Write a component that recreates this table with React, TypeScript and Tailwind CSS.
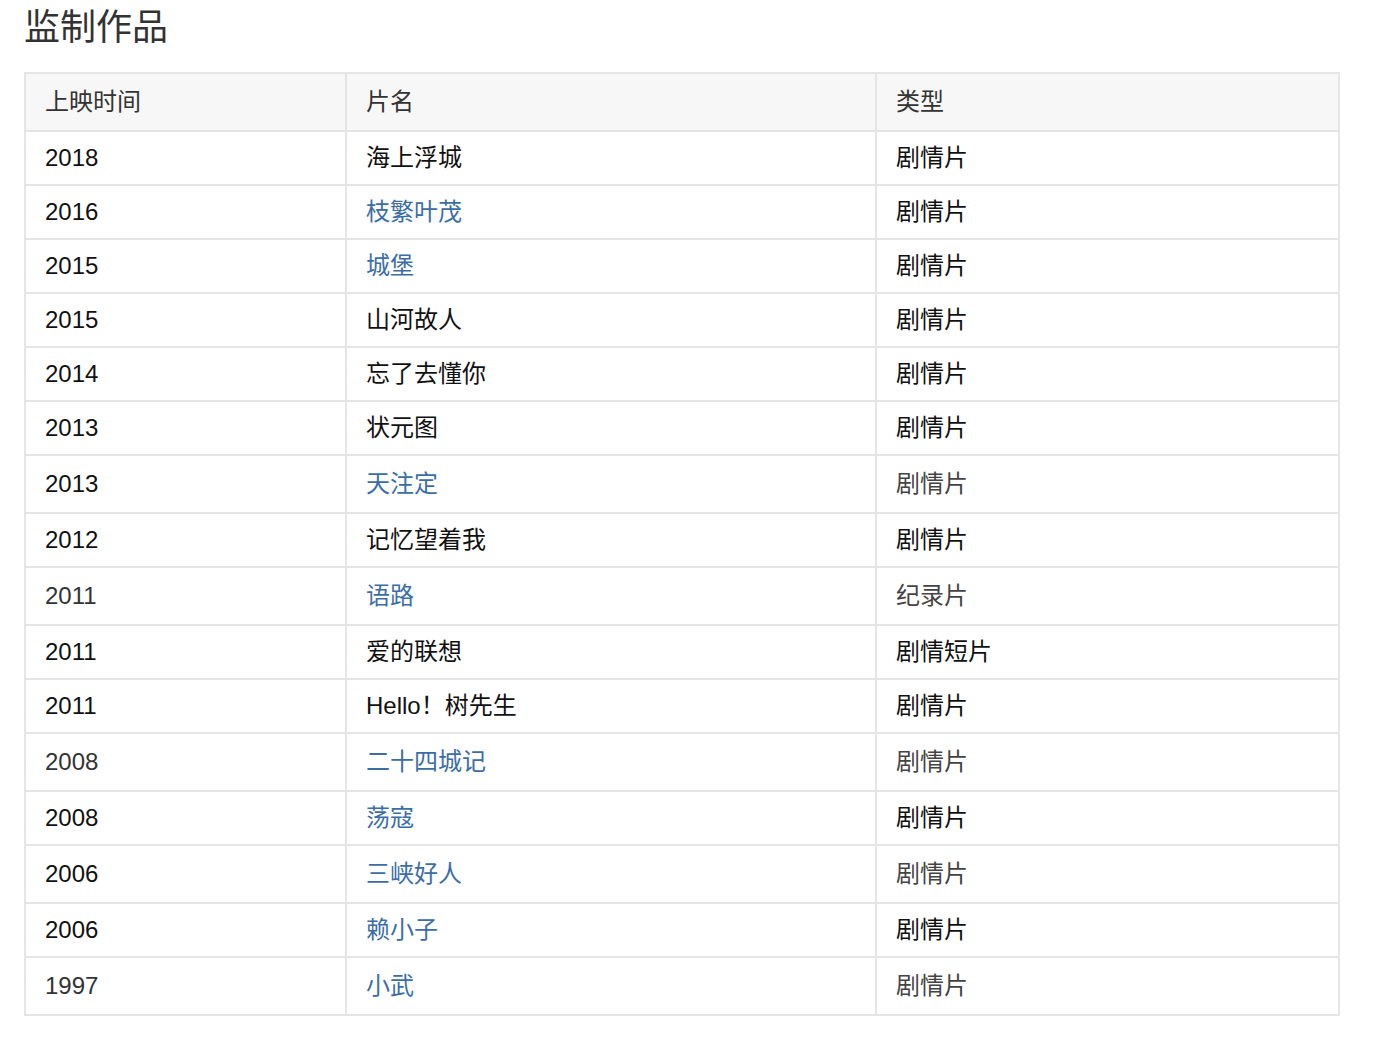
import React from 'react';

type Row = { year: string; title: string; genre: string; link?: boolean; tall?: boolean; dimYear?: boolean; dimGenre?: boolean };

const ROWS: Row[] = [
  { year: '2018', title: '海上浮城', genre: '剧情片' },
  { year: '2016', title: '枝繁叶茂', genre: '剧情片', link: true },
  { year: '2015', title: '城堡', genre: '剧情片', link: true },
  { year: '2015', title: '山河故人', genre: '剧情片' },
  { year: '2014', title: '忘了去懂你', genre: '剧情片' },
  { year: '2013', title: '状元图', genre: '剧情片' },
  { year: '2013', title: '天注定', genre: '剧情片', link: true, tall: true, dimGenre: true },
  { year: '2012', title: '记忆望着我', genre: '剧情片' },
  { year: '2011', title: '语路', genre: '纪录片', link: true, tall: true, dimYear: true, dimGenre: true },
  { year: '2011', title: '爱的联想', genre: '剧情短片' },
  { year: '2011', title: 'Hello！树先生', genre: '剧情片' },
  { year: '2008', title: '二十四城记', genre: '剧情片', link: true, tall: true, dimYear: true, dimGenre: true },
  { year: '2008', title: '荡寇', genre: '剧情片', link: true },
  { year: '2006', title: '三峡好人', genre: '剧情片', link: true, tall: true, dimGenre: true },
  { year: '2006', title: '赖小子', genre: '剧情片', link: true },
  { year: '1997', title: '小武', genre: '剧情片', link: true, tall: true, dimYear: true, dimGenre: true },
];

const cell = 'border-2 border-[#e5e5e5] pl-[19px] pr-4 align-middle';

export default function App() {
  return (
    <div className="min-h-screen bg-white pl-6 font-['Liberation_Sans','Noto_Sans_CJK_SC',sans-serif]">
      <h2 className="text-[36px] leading-[56px] text-[#333]">监制作品</h2>
      <table className="mt-4 w-[1314px] table-fixed border-collapse text-[24px]">
        <colgroup>
          <col className="w-[321px]" />
          <col className="w-[530px]" />
          <col className="w-[463px]" />
        </colgroup>
        <thead>
          <tr className="h-[58px] bg-[#f7f7f7] text-[#333]">
            <th className={`${cell} text-left font-normal`}>上映时间</th>
            <th className={`${cell} text-left font-normal`}>片名</th>
            <th className={`${cell} text-left font-normal`}>类型</th>
          </tr>
        </thead>
        <tbody>
          {ROWS.map((r, i) => (
            <tr key={i} className={r.tall ? 'h-[58px]' : 'h-[54px]'}>
              <td className={`${cell} ${r.dimYear ? 'text-[#333]' : 'text-[#111]'}`}>{r.year}</td>
              <td className={`${cell} ${r.link ? 'text-[#3b6ea8]' : 'text-[#111]'}`}>{r.title}</td>
              <td className={`${cell} ${r.dimGenre ? 'text-[#444]' : 'text-[#111]'}`}>{r.genre}</td>
            </tr>
          ))}
        </tbody>
      </table>
    </div>
  );
}
